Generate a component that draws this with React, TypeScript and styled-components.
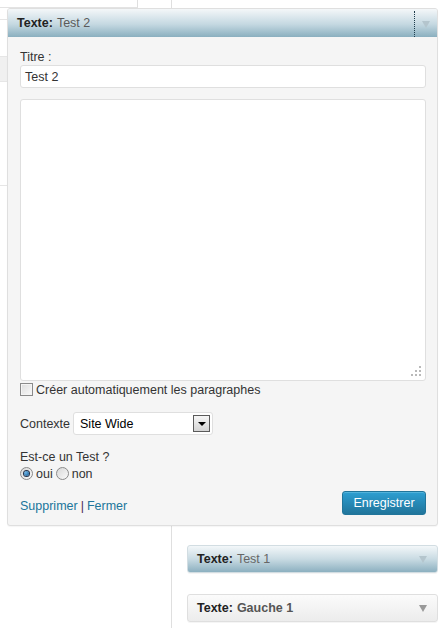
import React from "react";
import styled, { createGlobalStyle } from "styled-components";

const Global = createGlobalStyle`
  html, body { margin: 0; padding: 0; background: #fff; }
  body { font-family: "Liberation Sans", Arial, sans-serif; font-size: 12.5px; color: #333; }
  * { box-sizing: border-box; }
`;

const Page = styled.div`
  position: relative;
  width: 447px;
  height: 628px;
  overflow: hidden;
  display: flex;
`;

const LeftColumn = styled.div`
  width: 172px;
  flex: none;
  border-right: 1px solid #dfdfdf;
  display: flex;
  flex-direction: column;
`;

const TopBox = styled.div`
  width: 138px;
  height: 8px;
  border-right: 1px solid #dfdfdf;
  border-bottom: 1px solid #e3e3e3;
`;

const SideRow = styled.div<{ $h: number; $gray?: boolean }>`
  height: ${(p) => p.$h}px;
  border-bottom: 1px solid #e6e6e6;
  background: ${(p) => (p.$gray ? "#f0f0f0" : "transparent")};
`;

const RightColumn = styled.div`
  flex: 1;
  padding: 545px 9px 0 15px;
  display: flex;
  flex-direction: column;
  gap: 21px;
`;

const WidgetTop = styled.div<{ $open?: boolean }>`
  height: 28px;
  border: 1px solid ${(p) => (p.$open ? "#d2dde2" : "#dfdfdf")};
  border-radius: 3px;
  background: ${(p) =>
    p.$open
      ? "linear-gradient(to bottom, #f3f7f9 0%, #c9dbe3 50%, #8cb0c0 100%)"
      : "linear-gradient(to bottom, #fbfbfb 0%, #ececec 100%)"};
  display: flex;
  align-items: center;
  padding: 0 10px 0 9px;
  box-shadow: 0 1px 0 rgba(0, 0, 0, 0.04);
`;

const TitleStrong = styled.strong`
  font-weight: bold;
  color: #222;
`;

const TitleRest = styled.span<{ $bold?: boolean }>`
  color: ${(p) => (p.$bold ? "#555" : "#666")};
  font-weight: ${(p) => (p.$bold ? "bold" : "normal")};
  margin-left: 4px;
  flex: 1;
  white-space: nowrap;
`;

const Arrow = styled.span<{ $dark?: boolean }>`
  width: 0;
  height: 0;
  border-left: 4px solid transparent;
  border-right: 4px solid transparent;
  border-top: 7px solid ${(p) => (p.$dark ? "#999" : "#b4c5cd")};
`;

const Panel = styled.div`
  position: absolute;
  left: 7px;
  top: 8px;
  width: 431px;
  height: 518px;
  border: 1px solid #dfdfdf;
  border-radius: 3px;
  background: #f5f5f5;
  box-shadow: 0 1px 1px rgba(0, 0, 0, 0.04);
  display: flex;
  flex-direction: column;
`;

const PanelHeader = styled.div`
  height: 28px;
  flex: none;
  background: linear-gradient(to bottom, #f4f7f9 0%, #c4d8e1 55%, #8aafbf 100%);
  border-radius: 2px 2px 0 0;
  display: flex;
  align-items: center;
  padding: 0 0 0 9px;
`;

const HeaderTitle = styled.div`
  flex: 1;
  display: flex;
  align-items: center;
`;

const HeaderRest = styled.span`
  color: #5a5a5a;
  margin-left: 4px;
`;

const Toggle = styled.div`
  width: 23px;
  align-self: stretch;
  margin-top: 2px;
  border-left: 1px dotted #1d3b4a;
  display: flex;
  align-items: center;
  justify-content: center;
`;

const Body = styled.div`
  flex: 1;
  padding: 13px 11px 12px 12px;
  display: flex;
  flex-direction: column;
`;

const Label = styled.div`
  line-height: 15px;
  color: #333;
`;

const TextInput = styled.div`
  height: 23px;
  background: #fff;
  border: 1px solid #dfdfdf;
  border-radius: 3px;
  padding: 0 4px;
  display: flex;
  align-items: center;
  color: #333;
`;

const TextArea = styled.div`
  position: relative;
  margin-top: 11px;
  height: 282px;
  background: #fff;
  border: 1px solid #dfdfdf;
  border-radius: 3px;
`;

const Grip = styled.svg`
  position: absolute;
  right: 3px;
  bottom: 3px;
`;

const CheckRow = styled.label`
  display: flex;
  align-items: center;
  gap: 3px;
  height: 17px;
`;

const CheckBox = styled.span`
  width: 13px;
  height: 13px;
  border: 1px solid #8a8a8a;
  background: linear-gradient(to bottom right, #dcdcdc, #fafafa);
  box-shadow: inset 0 0 0 1px #f4f4f4;
`;

const ContextRow = styled.div`
  display: flex;
  align-items: center;
  gap: 3px;
  margin-top: 14px;
`;

const Select = styled.div`
  width: 140px;
  height: 23px;
  background: #fff;
  border: 1px solid #dfdfdf;
  border-radius: 3px;
  display: flex;
  align-items: center;
  padding: 0 2px 0 6px;
  color: #000;
`;

const SelectText = styled.span`
  flex: 1;
`;

const SelectButton = styled.span`
  width: 17px;
  height: 17px;
  border: 1px solid #5a5a5a;
  background: linear-gradient(to bottom, #f6f6f6, #d4d4d4);
  display: flex;
  align-items: center;
  justify-content: center;
`;

const SelectArrow = styled.span`
  width: 0;
  height: 0;
  border-left: 4px solid transparent;
  border-right: 4px solid transparent;
  border-top: 4px solid #000;
`;

const Question = styled.div`
  margin-top: 14px;
  line-height: 16px;
`;

const RadioRow = styled.div`
  display: flex;
  align-items: center;
  height: 17px;
`;

const Radio = styled.span<{ $checked?: boolean }>`
  width: 13px;
  height: 13px;
  border-radius: 50%;
  border: 1px solid #8a8a8a;
  background: linear-gradient(to bottom right, #d8d8d8, #fafafa);
  display: flex;
  align-items: center;
  justify-content: center;
  margin-right: 3px;
  &::after {
    content: "";
    display: ${(p) => (p.$checked ? "block" : "none")};
    width: 5px;
    height: 5px;
    border-radius: 50%;
    background: radial-gradient(circle at 35% 35%, #6fb6e8, #0a4f88);
    box-shadow: 0 0 0 1px #26324a;
  }
`;

const RadioText = styled.span`
  margin-right: 3px;
`;

const Footer = styled.div`
  display: flex;
  align-items: center;
  justify-content: space-between;
  margin-top: 12px;
`;

const Links = styled.div`
  color: #333;
  padding-top: 3px;
`;

const Link = styled.a`
  color: #21759b;
  text-decoration: none;
`;

const Sep = styled.span`
  color: #4b2a5a;
  margin: 0 3px;
`;

const SaveButton = styled.button`
  width: 84px;
  height: 24px;
  border: 1px solid #21759b;
  border-radius: 3px;
  background: linear-gradient(to bottom, #2e9fd2 0%, #2585b1 60%, #21759b 100%);
  color: #fff;
  font-family: "Liberation Sans", Arial, sans-serif;
  font-size: 12.5px;
  padding: 0;
  margin-top: -3px;
  box-shadow: inset 0 1px 0 rgba(120, 200, 230, 0.5);
`;

export default function App() {
  return (
    <>
      <Global />
      <Page>
        <LeftColumn>
          <TopBox />
          <SideRow $h={12} />
          <SideRow $h={37} />
          <SideRow $h={25} $gray />
          <SideRow $h={104} />
        </LeftColumn>
        <RightColumn>
          <WidgetTop $open>
            <TitleStrong>Texte:</TitleStrong>
            <TitleRest>Test 1</TitleRest>
            <Arrow />
          </WidgetTop>
          <WidgetTop>
            <TitleStrong>Texte:</TitleStrong>
            <TitleRest $bold>Gauche 1</TitleRest>
            <Arrow $dark />
          </WidgetTop>
        </RightColumn>

        <Panel>
          <PanelHeader>
            <HeaderTitle>
              <TitleStrong>Texte:</TitleStrong>
              <HeaderRest>Test 2</HeaderRest>
            </HeaderTitle>
            <Toggle>
              <Arrow />
            </Toggle>
          </PanelHeader>
          <Body>
            <Label>Titre :</Label>
            <TextInput>Test 2</TextInput>
            <TextArea>
              <Grip width="11" height="11" viewBox="0 0 11 11">
                <g fill="#b9b9b9">
                  <rect x="8" y="0" width="2" height="2" />
                  <rect x="4" y="4" width="2" height="2" />
                  <rect x="8" y="4" width="2" height="2" />
                  <rect x="0" y="8" width="2" height="2" />
                  <rect x="4" y="8" width="2" height="2" />
                  <rect x="8" y="8" width="2" height="2" />
                </g>
              </Grip>
            </TextArea>
            <CheckRow>
              <CheckBox />
              <span>Créer automatiquement les paragraphes</span>
            </CheckRow>
            <ContextRow>
              <span>Contexte</span>
              <Select>
                <SelectText>Site Wide</SelectText>
                <SelectButton>
                  <SelectArrow />
                </SelectButton>
              </Select>
            </ContextRow>
            <Question>Est-ce un Test ?</Question>
            <RadioRow>
              <Radio $checked />
              <RadioText>oui</RadioText>
              <Radio />
              <RadioText>non</RadioText>
            </RadioRow>
            <Footer>
              <Links>
                <Link href="#">Supprimer</Link>
                <Sep>|</Sep>
                <Link href="#">Fermer</Link>
              </Links>
              <SaveButton>Enregistrer</SaveButton>
            </Footer>
          </Body>
        </Panel>
      </Page>
    </>
  );
}
